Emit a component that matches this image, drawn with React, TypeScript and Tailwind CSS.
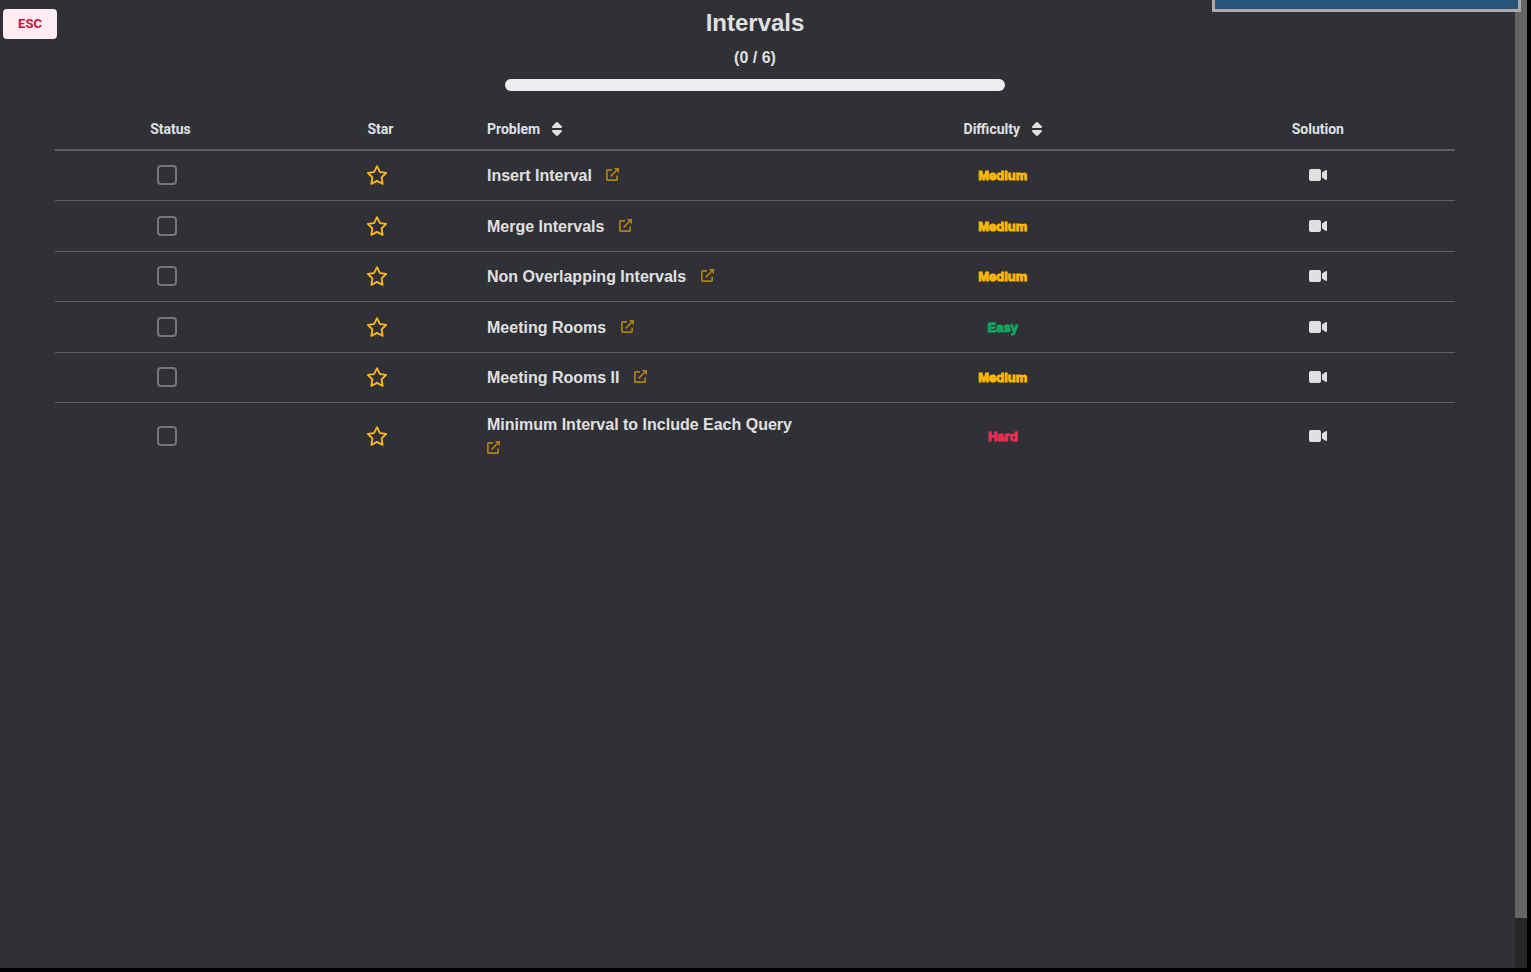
import { useState } from "react";
import { FaRegStar, FaSort, FaVideo } from "react-icons/fa6";

type Difficulty = "Easy" | "Medium" | "Hard";

const problems: { name: string; difficulty: Difficulty }[] = [
  { name: "Insert Interval", difficulty: "Medium" },
  { name: "Merge Intervals", difficulty: "Medium" },
  { name: "Non Overlapping Intervals", difficulty: "Medium" },
  { name: "Meeting Rooms", difficulty: "Easy" },
  { name: "Meeting Rooms II", difficulty: "Medium" },
  { name: "Minimum Interval to Include Each Query", difficulty: "Hard" },
];

const difficultyColor: Record<Difficulty, string> = {
  Easy: "text-[#10a860]",
  Medium: "text-[#ffb800]",
  Hard: "text-[#f02d55]",
};

function ExternalIcon() {
  return (
    <svg viewBox="0 0 13 13" className="inline size-[13px] align-baseline" fill="none" stroke="currentColor" strokeWidth="1.7" aria-hidden="true">
      <path d="M6 1.85H1.85a1 1 0 0 0-1 1v8.3a1 1 0 0 0 1 1h8.3a1 1 0 0 0 1-1V7.5" />
      <path d="M4.6 8.4L11 2" />
      <path d="M7.8 0H13v5.2z" fill="currentColor" stroke="none" />
    </svg>
  );
}

function ProblemRow({ name, difficulty }: { name: string; difficulty: Difficulty }) {
  const [done, setDone] = useState(false);
  return (
    <tr className="border-b border-[#5f5f5f] odd:h-[50px] even:h-[51px] last:border-b-0">
      <td className="px-3">
        <div className="flex justify-center pr-2">
          <input
            type="checkbox"
            checked={done}
            onChange={(e) => setDone(e.target.checked)}
            aria-label={`Mark ${name} as complete`}
            className="size-5 appearance-none rounded border-2 border-[#767676] bg-transparent checked:bg-[#10a860]"
          />
        </div>
      </td>
      <td className="px-3">
        <div className="flex justify-center pr-2">
          <button type="button" aria-label={`Star ${name}`} className="text-[#ffb81c]">
            <FaRegStar className="h-5 w-[22px]" />
          </button>
        </div>
      </td>
      <td className="px-3 pt-[10px] pb-2 text-base leading-6 font-bold text-[#e0e0e0]">
        <a href="#problem" className="mr-[10px]">{name}</a>{" "}
        <a href="#external" aria-label={`Open ${name}`} className="inline-block text-[#b08010]">
          <ExternalIcon />
        </a>
      </td>
      <td className="px-3 text-center">
        <span className={`text-[13px] font-bold [-webkit-text-stroke:1px_currentColor] ${difficultyColor[difficulty]}`}>{difficulty}</span>
      </td>
      <td className="px-3">
        <div className="flex justify-center">
          <button type="button" aria-label={`Watch ${name} solution`} className="text-[#e0e0e0]">
            <FaVideo className="h-4 w-[18px]" />
          </button>
        </div>
      </td>
    </tr>
  );
}

export default function App() {
  return (
    <div className="relative flex h-screen overflow-hidden border-r-4 border-b-4 border-black bg-[#303136] font-['Liberation_Sans',sans-serif] text-[#e0e0e0]">
      <main className="relative flex-1 pt-2 pr-[60px] pl-[55px]">
        <button type="button" className="absolute top-[9px] left-[3px] h-[30px] w-[54px] rounded bg-[#feecf0] font-['Roboto',sans-serif] text-[13px] font-bold text-[#cc0f35]">
          ESC
        </button>
        <header className="flex flex-col items-center">
          <h1 className="text-2xl leading-[30px] font-bold">Intervals</h1>
          <p className="mt-2 text-base leading-6 font-bold">(0 / 6)</p>
          <div role="progressbar" aria-label="Problems solved" aria-valuenow={0} aria-valuemin={0} aria-valuemax={6} className="mt-[9px] h-3 w-full max-w-[500px] rounded-full bg-[#ededed]" />
        </header>
        <table className="mt-4 w-full table-fixed border-collapse">
          <thead className="font-['Roboto',sans-serif] text-sm">
            <tr className="h-[43px] border-b-2 border-[#5f5f5f]">
              <th className="w-[16.5%] px-3 pt-[2px]">Status</th>
              <th className="w-[13.5%] px-3 pt-[2px]">Star</th>
              <th className="w-[25%] px-3 pt-[2px] text-left">
                <button type="button" className="flex items-center gap-3 font-bold">
                  Problem <FaSort className="h-4 w-[10px]" />
                </button>
              </th>
              <th className="w-[25.4%] px-3 pt-[2px]">
                <button type="button" className="inline-flex items-center gap-3 font-bold">
                  Difficulty <FaSort className="h-4 w-[10px]" />
                </button>
              </th>
              <th className="w-[19.6%] px-3 pt-[2px]">Solution</th>
            </tr>
          </thead>
          <tbody>
            {problems.map((p) => (
              <ProblemRow key={p.name} {...p} />
            ))}
          </tbody>
        </table>
      </main>
      <div className="w-3 bg-[#262626]" aria-hidden="true">
        <div className="h-[94.8%] bg-[#656565]" />
      </div>
      <div className="absolute top-0 right-[6px] h-3 w-[309px] border-3 border-t-0 border-[#aaaaaa] bg-[#285577]" aria-hidden="true" />
    </div>
  );
}
